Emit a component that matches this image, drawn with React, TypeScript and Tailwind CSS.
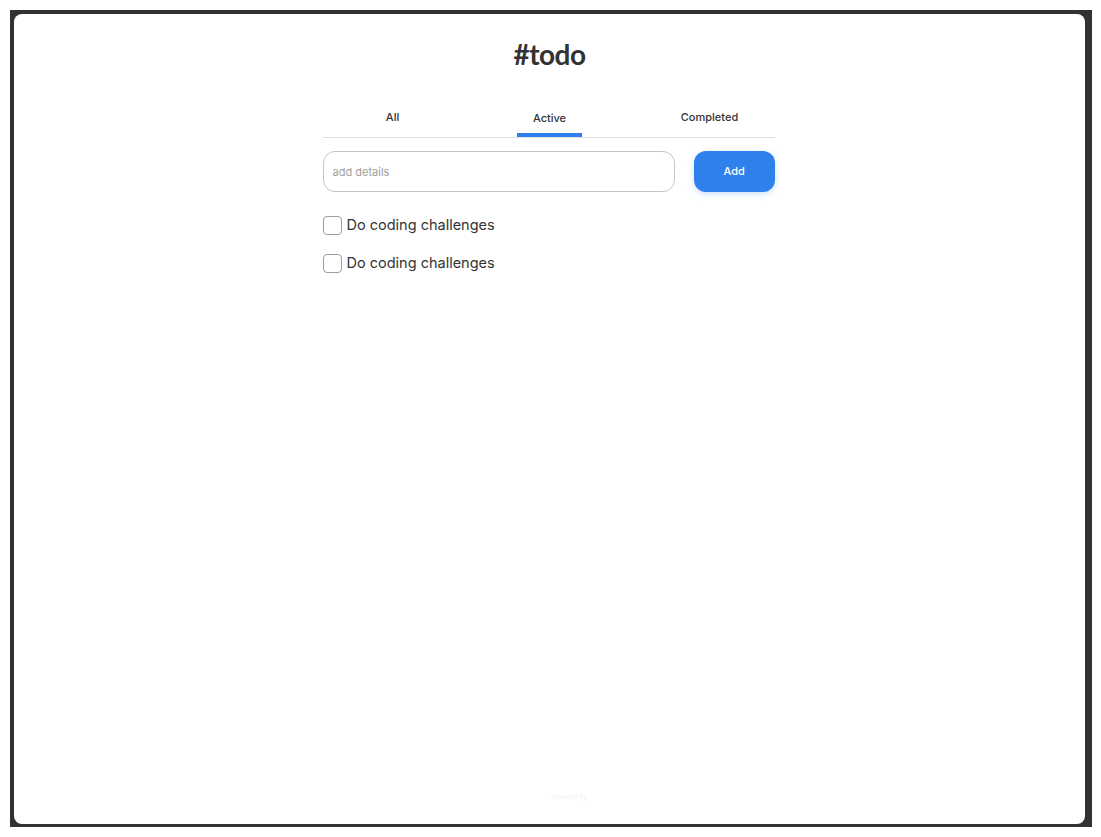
import React, { useState } from 'react';

type Todo = { id: number; text: string; done: boolean };

const tabs = ['All', 'Active', 'Completed'] as const;

const App: React.FC = () => {
  const [tab, setTab] = useState<(typeof tabs)[number]>('Active');
  const [todos, setTodos] = useState<Todo[]>([
    { id: 1, text: 'Do coding challenges', done: false },
    { id: 2, text: 'Do coding challenges', done: false },
  ]);
  const [draft, setDraft] = useState('');

  const addTodo = () => {
    if (!draft.trim()) return;
    setTodos([...todos, { id: Date.now(), text: draft.trim(), done: false }]);
    setDraft('');
  };

  return (
    <div className="w-[1101px] h-[837px] bg-white pl-[10px] pt-[10px] pr-[9px] pb-[10px] font-['Inter',sans-serif]">
      <div className="h-full bg-[#323232] pl-[4px] pt-[4px] pr-[7px] pb-[3px]">
        <div className="h-full bg-white rounded-[8px] flex flex-col items-center">
          <h1 className="mt-[24px] text-[28px] leading-[32px] font-bold tracking-[-0.5px] text-[#333333] font-['Lato',sans-serif]">
            #todo
          </h1>

          <div className="mt-[36px] w-[452px] mr-[2px]">
            {/* tabs */}
            <nav className="flex border-b border-[#e0e0e0] text-[11px] font-medium text-[#333333]">
              <button onClick={() => setTab('All')} className="w-[140px] flex justify-center">
                <span className={`px-4 pb-[6px] pt-[3px] border-b-4 rounded-t ${tab === 'All' ? 'border-[#2f80ed]' : 'border-transparent'}`}>All</span>
              </button>
              <button onClick={() => setTab('Active')} className="w-[174px] flex justify-center">
                <span className={`px-4 pb-[6px] pt-[4px] border-b-4 rounded-t ${tab === 'Active' ? 'border-[#2f80ed]' : 'border-transparent'}`}>Active</span>
              </button>
              <button onClick={() => setTab('Completed')} className="flex-1 flex justify-center pl-[8px]">
                <span className={`px-4 pb-[6px] pt-[3px] border-b-4 rounded-t ${tab === 'Completed' ? 'border-[#2f80ed]' : 'border-transparent'}`}>Completed</span>
              </button>
            </nav>

            {/* input row */}
            <div className="mt-[13px] flex gap-[19px]">
              <input
                value={draft}
                onChange={(e) => setDraft(e.target.value)}
                placeholder="add details"
                className="w-[354px] h-[41px] rounded-[12px] border border-[#c4c4c4] px-[9px] pt-[2px] text-[11px] text-[#333333] placeholder:text-[#a0a0a0] outline-none"
              />
              <button
                onClick={addTodo}
                className="w-[81px] h-[41px] rounded-[12px] bg-[#2f80ed] text-white text-[11px] font-medium shadow-[0_2px_6px_rgba(127,177,243,0.4)]"
              >
                Add
              </button>
            </div>

            {/* list */}
            <ul className="mt-[24px] flex flex-col gap-[19px]">
              {todos.map((t) => (
                <li key={t.id} className="flex items-center gap-[5px] h-[19px]">
                  <button
                    onClick={() => setTodos(todos.map((x) => (x.id === t.id ? { ...x, done: !x.done } : x)))}
                    className={`w-[19px] h-[19px] rounded-[4px] border border-[#9e9e9e] ${t.done ? 'bg-[#2f80ed] border-[#2f80ed]' : 'bg-white'}`}
                  />
                  <span className="text-[14.5px] font-normal text-[#333333]">{t.text}</span>
                </li>
              ))}
            </ul>
          </div>

          <p className="mt-auto mb-[22px] ml-[40px] text-[7px] text-[#f2f2f2]">created by</p>
        </div>
      </div>
    </div>
  );
};

export default App;
